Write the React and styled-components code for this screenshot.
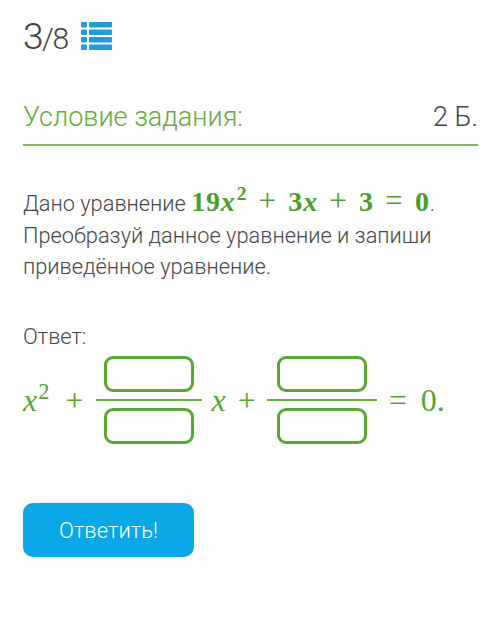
import React from "react";
import styled, { createGlobalStyle } from "styled-components";

const Global = createGlobalStyle`
  html, body { margin: 0; padding: 0; background: #ffffff; }
  body { font-family: Roboto, "Noto Sans", sans-serif; color: #444444; }
  * { box-sizing: border-box; }
`;

const Page = styled.div`
  width: 500px;
  padding: 17px 22px 0 23px;
`;

const TopRow = styled.div`
  display: flex;
  align-items: center;
  gap: 13px;
  height: 38px;
`;

const Counter = styled.div`
  font-size: 37px;
  font-weight: 300;
  line-height: 1;
  color: #3f3f3f;
  letter-spacing: -1.5px;
`;

const Total = styled.span`
  font-size: 30px;
`;

const Header = styled.div`
  display: flex;
  justify-content: space-between;
  align-items: baseline;
  margin-top: 44px;
  padding-bottom: 9px;
  border-bottom: 2px solid #7cb661;
`;

const Title = styled.div`
  font-size: 27px;
  font-weight: 300;
  line-height: 36px;
  color: #63a840;
`;

const Points = styled.div`
  font-size: 27px;
  font-weight: 300;
  line-height: 36px;
  color: #444444;
`;

const Text = styled.p`
  margin: 42px 0 0;
  font-size: 21.8px;
  font-weight: 300;
  line-height: 31.5px;
  color: #454545;
`;

const Math = styled.span`
  font-family: "Liberation Serif", "DejaVu Serif", serif;
  font-weight: ${(p) => (p.$bold ? 700 : 400)};
  font-size: ${(p) => p.$size || 26}px;
  line-height: 1;
  letter-spacing: 0.8px;
  color: #4b9d2c;
  white-space: nowrap;
`;

const Var = styled.i`
  font-style: italic;
`;

const Sup = styled.sup`
  font-size: 0.7em;
  line-height: 0;
  vertical-align: 0.55em;
  margin-left: 1px;
`;

const Op = styled.span`
  font-weight: 400;
  font-size: 1.12em;
  line-height: 0;
  margin: 0 0.36em;
`;

const Label = styled.div`
  margin-top: 38px;
  font-size: 21.8px;
  font-weight: 300;
  line-height: 31.5px;
  color: #454545;
`;

const AnswerRow = styled.div`
  display: flex;
  align-items: center;
  margin-top: 4px;
  font-family: "Liberation Serif", "DejaVu Serif", serif;
  font-size: 32px;
  color: #55a52f;
`;

const Token = styled.span`
  display: inline-block;
  margin: ${(p) => p.$m || "0"};
  line-height: 1;
`;

const Fraction = styled.div`
  display: flex;
  flex-direction: column;
  align-items: center;
  width: ${(p) => p.$w}px;
  margin: ${(p) => p.$m || "0"};
`;

const Box = styled.div`
  width: 90px;
  height: 36px;
  border: 3px solid #5aa631;
  border-radius: 9px;
`;

const Bar = styled.div`
  width: 100%;
  height: 2px;
  background: #68ad44;
  margin: 7px 0 7px;
`;

const Button = styled.button`
  display: flex;
  align-items: center;
  justify-content: center;
  margin-top: 59px;
  width: 171px;
  height: 54px;
  border: none;
  border-radius: 10px;
  background: #0aa8e7;
  color: #ffffff;
  font-family: Roboto, sans-serif;
  font-size: 22px;
  font-weight: 300;
  cursor: pointer;
`;

const ListIcon = () => (
  <svg width="31" height="29" viewBox="0 0 31 29" fill="#1e9dd9">
    {[0, 7.5, 15, 22.5].map((y) => (
      <g key={y}>
        <rect x="0" y={y} width="6" height="5.5" rx="1" />
        <rect x="8" y={y} width="23" height="5.5" rx="1" />
      </g>
    ))}
  </svg>
);

export default function App() {
  return (
    <>
      <Global />
      <Page>
        <TopRow>
          <Counter>
            3<Total>/8</Total>
          </Counter>
          <ListIcon />
        </TopRow>
        <Header>
          <Title>Условие задания:</Title>
          <Points>2 Б.</Points>
        </Header>
        <Text>
          Дано уравнение{" "}
          <Math $bold $size={28}>
            19<Var>x</Var>
            <Sup>2</Sup>
            <Op>+</Op>3<Var>x</Var>
            <Op>+</Op>3<Op>=</Op>0
          </Math>
          .<br />
          Преобразуй данное уравнение и запиши приведённое уравнение.
        </Text>
        <Label>Ответ:</Label>
        <AnswerRow>
          <Token>
            <i>x</i>
            <Sup>2</Sup>
          </Token>
          <Token $m="0 13px 0 16px">+</Token>
          <Fraction $w={106}>
            <Box />
            <Bar />
            <Box />
          </Fraction>
          <Token $m="0 0 0 9px">
            <i>x</i>
          </Token>
          <Token $m="0 11px 0 12px">+</Token>
          <Fraction $w={110}>
            <Box />
            <Bar />
            <Box />
          </Fraction>
          <Token $m="0 14px 0 12px">=</Token>
          <Token>0.</Token>
        </AnswerRow>
        <Button>Ответить!</Button>
      </Page>
    </>
  );
}
